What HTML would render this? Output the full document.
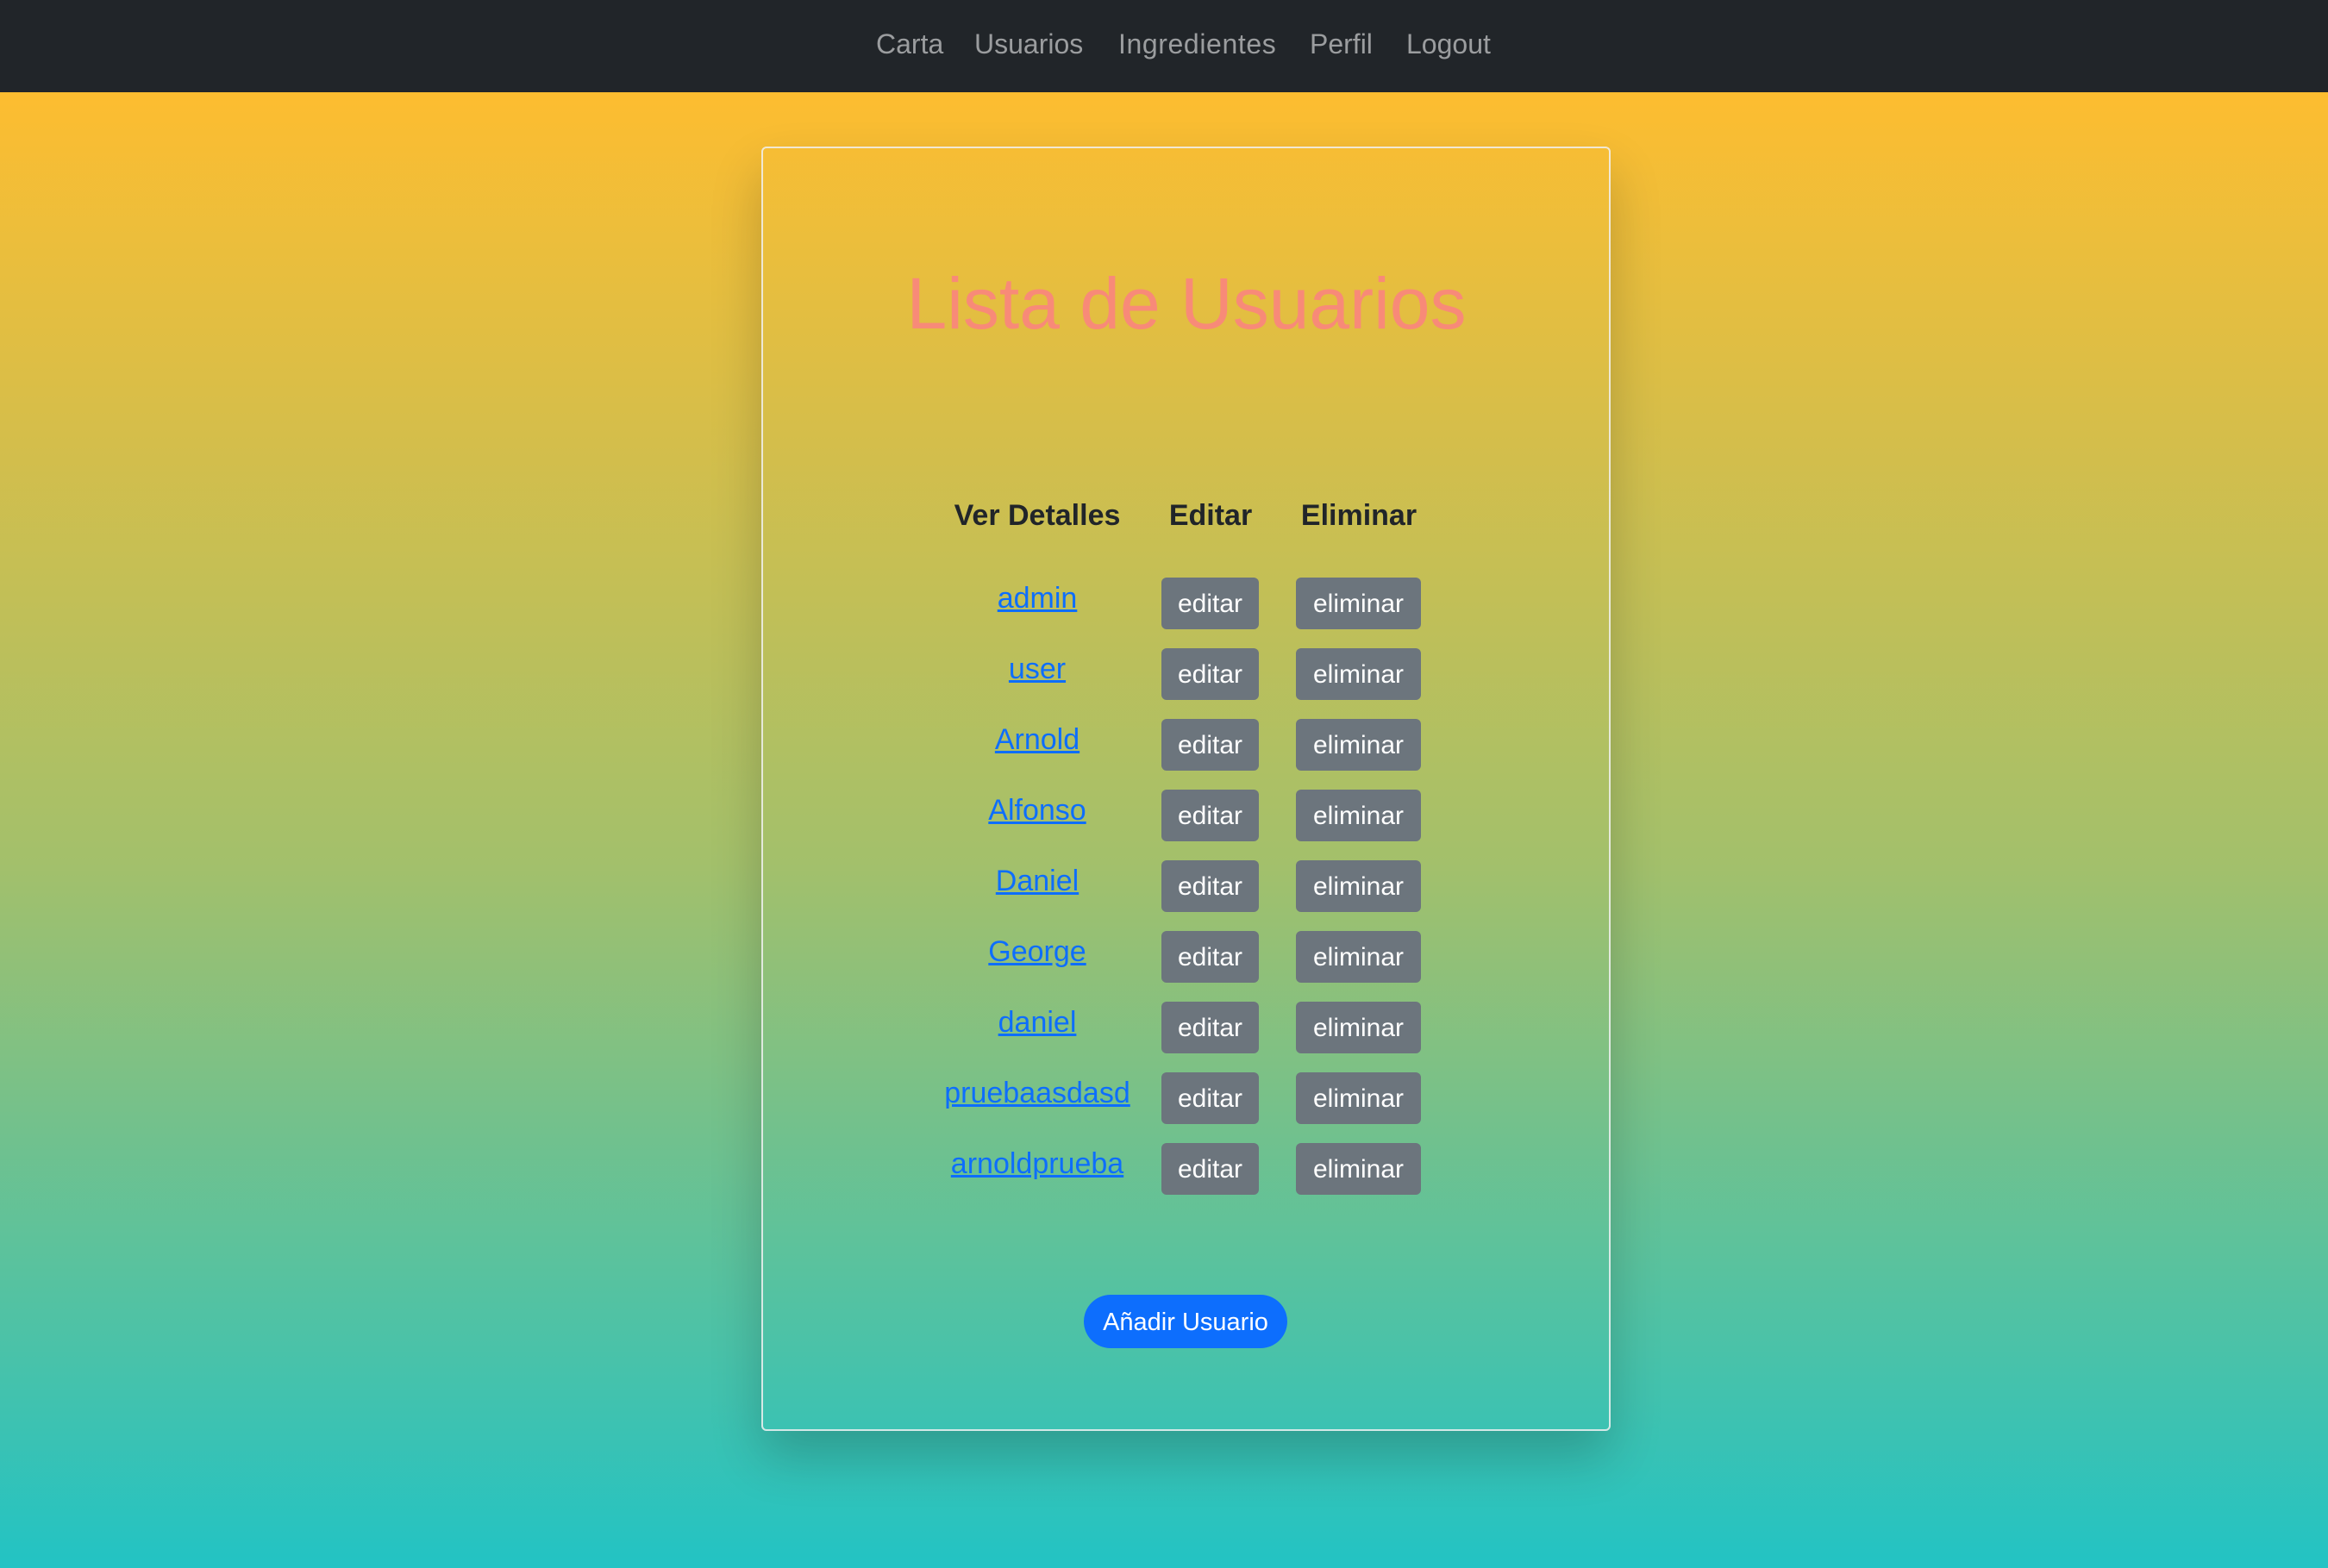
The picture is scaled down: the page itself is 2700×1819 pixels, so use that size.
<!DOCTYPE html>
<html><head><meta charset="utf-8"><style>
*{margin:0;padding:0;box-sizing:border-box}
html,body{width:2700px;height:1819px;overflow:hidden}
body{font-family:"Liberation Sans",sans-serif;background:linear-gradient(180deg,#fdbd30 107px,#a3c06b 55%,#22c3c4 100%);position:relative}
nav{position:absolute;left:0;top:0;width:2700px;height:107px;background:#212529}
nav span{position:absolute;top:31px;font-size:32px;color:#9b9d9f;line-height:40px}
.card{position:absolute;left:883px;top:170px;width:985px;height:1490px;border:2px solid rgba(240,240,240,.85);border-radius:6px;box-shadow:0 30px 60px rgba(0,0,0,.2)}
h1{position:absolute;left:876px;width:1000px;text-align:center;top:302px;font-size:84px;font-weight:normal;color:#f88a78;line-height:100px}
.h{position:absolute;top:577px;font-size:34px;font-weight:bold;color:#212529;transform:translateX(-50%);white-space:nowrap;line-height:42px}
.l{position:absolute;font-size:34px;color:#0d6efd;text-decoration:underline;transform:translateX(-50%);white-space:nowrap;line-height:40px}
.b{position:absolute;height:60px;background:#6c757d;color:#fff;border-radius:6px;font-size:30px;line-height:62px;text-align:center}
.add{position:absolute;left:1257px;top:1502px;width:236px;height:62px;border-radius:31px;background:#0d6efd;color:#fff;font-size:29px;line-height:64px;text-align:center}
</style></head><body>
<nav><span style="left:1016px">Carta</span><span style="left:1130px">Usuarios</span><span style="left:1297px;letter-spacing:0.6px">Ingredientes</span><span style="left:1519px">Perfil</span><span style="left:1631px">Logout</span></nav>
<div class="card"></div>
<h1>Lista de Usuarios</h1>
<div class="h" style="left:1203px">Ver Detalles</div>
<div class="h" style="left:1404px">Editar</div>
<div class="h" style="left:1576px">Eliminar</div>
<div class="l" style="left:1203px;top:674px">admin</div><div class="b" style="left:1347px;top:670px;width:113px">editar</div><div class="b" style="left:1503px;top:670px;width:145px">eliminar</div>
<div class="l" style="left:1203px;top:756px">user</div><div class="b" style="left:1347px;top:752px;width:113px">editar</div><div class="b" style="left:1503px;top:752px;width:145px">eliminar</div>
<div class="l" style="left:1203px;top:838px">Arnold</div><div class="b" style="left:1347px;top:834px;width:113px">editar</div><div class="b" style="left:1503px;top:834px;width:145px">eliminar</div>
<div class="l" style="left:1203px;top:920px">Alfonso</div><div class="b" style="left:1347px;top:916px;width:113px">editar</div><div class="b" style="left:1503px;top:916px;width:145px">eliminar</div>
<div class="l" style="left:1203px;top:1002px">Daniel</div><div class="b" style="left:1347px;top:998px;width:113px">editar</div><div class="b" style="left:1503px;top:998px;width:145px">eliminar</div>
<div class="l" style="left:1203px;top:1084px">George</div><div class="b" style="left:1347px;top:1080px;width:113px">editar</div><div class="b" style="left:1503px;top:1080px;width:145px">eliminar</div>
<div class="l" style="left:1203px;top:1166px">daniel</div><div class="b" style="left:1347px;top:1162px;width:113px">editar</div><div class="b" style="left:1503px;top:1162px;width:145px">eliminar</div>
<div class="l" style="left:1203px;top:1248px">pruebaasdasd</div><div class="b" style="left:1347px;top:1244px;width:113px">editar</div><div class="b" style="left:1503px;top:1244px;width:145px">eliminar</div>
<div class="l" style="left:1203px;top:1330px">arnoldprueba</div><div class="b" style="left:1347px;top:1326px;width:113px">editar</div><div class="b" style="left:1503px;top:1326px;width:145px">eliminar</div>
<div class="add">Añadir Usuario</div>
</body></html>
